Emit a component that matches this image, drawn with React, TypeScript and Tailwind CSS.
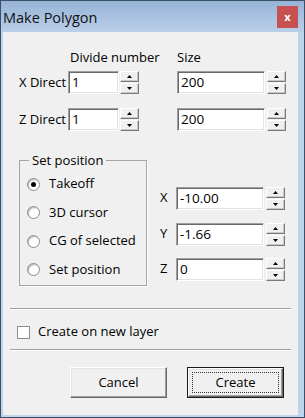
import React from 'react'

const font = { fontFamily: '"Open Sans", "Liberation Sans", Arial, sans-serif' }

function Spin() {
    return (
        <div className="flex flex-col gap-[1px] w-[19px] h-[23px]">
            {[0, 1].map((i) => (
                <div
                    key={i}
                    className="flex-1 flex items-center justify-center bg-[#f0f0f0] border border-t-white border-l-white border-r-[#7a7a7a] border-b-[#7a7a7a] shadow-[inset_-1px_-1px_0_#c8c8c8]"
                >
                    <svg width="5" height="3" viewBox="0 0 5 3">
                        {i === 0 ? (
                            <polygon points="2.5,0 5,3 0,3" fill="#000" />
                        ) : (
                            <polygon points="0,0 5,0 2.5,3" fill="#000" />
                        )}
                    </svg>
                </div>
            ))}
        </div>
    )
}

function Field({ value, width }: { value: string; width: string }) {
    return (
        <div
            className={`${width} h-[23px] bg-white border border-t-[#a0a0a0] border-l-[#a0a0a0] border-b-white border-r-white shadow-[inset_1px_1px_0_#696969,inset_-1px_-1px_0_#e3e3e3] flex items-center pl-[3px] text-[13.5px] text-black`}
        >
            {value}
        </div>
    )
}

function Radio({ checked, label }: { checked?: boolean; label: string }) {
    return (
        <div className="flex items-center h-[14px] whitespace-nowrap">
            <div className="shrink-0 w-[13px] h-[13px] rounded-full bg-white border border-[#8c8c8c] shadow-[inset_1px_1px_1px_#b5b5b5] flex items-center justify-center">
                {checked && <div className="w-[5px] h-[5px] rounded-full bg-black" />}
            </div>
            <span className="ml-[9px] text-[13px] text-black">{label}</span>
        </div>
    )
}

function Button({ label, primary }: { label: string; primary?: boolean }) {
    return (
        <div className={`w-[97px] h-[31px] ${primary ? 'border border-[#1a1a1a]' : ''}`}>
            <div className="w-full h-full bg-[#f0f0f0] border border-t-white border-l-white border-r-[#696969] border-b-[#696969] shadow-[inset_-1px_-1px_0_#a0a0a0,inset_1px_1px_0_#e3e3e3] flex items-center justify-center p-[3px]">
                <div className={`w-full h-full flex items-center justify-center text-[13px] text-black ${primary ? 'border border-dotted border-[#333]' : ''}`}>
                    {label}
                </div>
            </div>
        </div>
    )
}

export default function App() {
    return (
        <div className="w-[305px] h-[418px] border border-[#3d4f66] bg-[#bed4ea] flex flex-col" style={font}>
            {/* title bar */}
            <div className="h-[31px] flex items-center justify-between bg-gradient-to-b from-[#96b3d6] to-[#bad0e9] pl-[2px] pr-[6px]">
                <span className="text-[14.5px] text-[#111] mt-[2px]">Make Polygon</span>
                <div className="w-[21px] h-[22px] bg-[#c75050] flex items-center justify-center mt-[1px] text-white text-[11px] font-bold">
                    x
                </div>
            </div>

            {/* client */}
            <div className="ml-[2px] mr-[6px] mb-[2px] flex-1 bg-[#f0f0f0] flex flex-col">
                <div className="mt-[19px] h-[14px] flex items-center text-[13px] text-black whitespace-nowrap">
                    <span className="ml-[67px] w-[107px]">Divide number</span>
                    <span>Size</span>
                </div>

                {['X Direct', 'Z Direct'].map((label, i) => (
                    <div key={label} className={`${i === 0 ? 'mt-[6px]' : 'mt-[14px]'} h-[23px] flex items-center`}>
                        <span className="ml-[16px] w-[49px] text-[13px] text-black whitespace-nowrap overflow-hidden">{label}</span>
                        <Field value="1" width="w-[51px]" />
                        <div className="ml-[1px]">
                            <Spin />
                        </div>
                        <div className="ml-[38px]">
                            <Field value="200" width="w-[88px]" />
                        </div>
                        <div className="ml-[2px]">
                            <Spin />
                        </div>
                    </div>
                ))}

                <div className="mt-[22px] flex items-start">
                    <fieldset className="ml-[16px] w-[128px] h-[133px] border border-[#a5a5a5] shadow-[1px_1px_0_#fff] px-[9px]">
                        <legend className="ml-0 px-[3px] text-[13px] text-black leading-[15px]">Set position</legend>
                        <div className="mt-[9px] flex flex-col gap-[14.5px] -ml-[2px]">
                            <Radio checked label="Takeoff" />
                            <Radio label="3D cursor" />
                            <Radio label="CG of selected" />
                            <Radio label="Set position" />
                        </div>
                    </fieldset>

                    <div className="mt-[33px] ml-[13px] flex flex-col">
                        {[
                            ['X', '-10.00', 'mt-0'],
                            ['Y', '-1.66', 'mt-[12px]'],
                            ['Z', '0', 'mt-[11px]'],
                        ].map(([l, v, m]) => (
                            <div key={l} className={`${m} h-[24px] flex items-center`}>
                                <span className="w-[16px] text-[13px] text-black">{l}</span>
                                <Field value={v} width="w-[88px]" />
                                <div className="ml-[2px]">
                                    <Spin />
                                </div>
                            </div>
                        ))}
                    </div>
                </div>

                <div className="mt-[22px] mx-[7px] h-[2px] border-t border-[#a0a0a0] border-b border-b-white" />

                <div className="mt-[15px] ml-[14px] flex items-center h-[14px]">
                    <div className="w-[13px] h-[13px] bg-white border border-[#8c8c8c]" />
                    <span className="ml-[8px] text-[13px] text-black">Create on new layer</span>
                </div>

                <div className="mt-[10px] mx-[7px] h-[2px] border-t border-[#a0a0a0] border-b border-b-white" />

                <div className="mt-[16px] flex">
                    <div className="ml-[67px]">
                        <Button label="Cancel" />
                    </div>
                    <div className="ml-[20px]">
                        <Button label="Create" primary />
                    </div>
                </div>
            </div>
        </div>
    )
}
